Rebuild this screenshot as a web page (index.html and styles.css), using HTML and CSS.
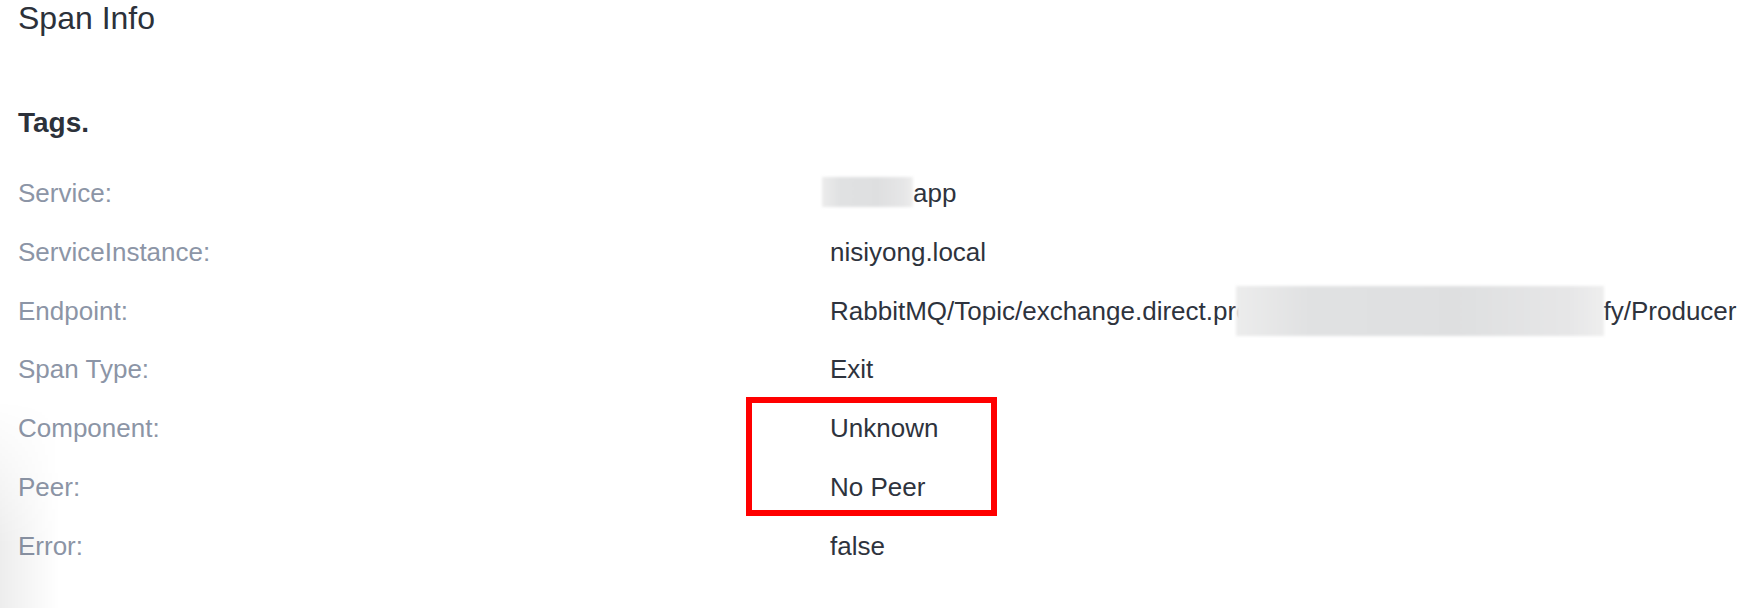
FILE: index.html
```html
<!DOCTYPE html>
<html>
<head>
<meta charset="utf-8">
<link rel="stylesheet" href="styles.css">
</head>
<body>
<div class="page">
  <h2 class="title">Span Info</h2>
  <h3 class="tags">Tags.</h3>
  <div class="list">
    <div class="label">Service:</div>
    <div class="value"><span class="mask mask-svc"></span>app</div>
    <div class="label">ServiceInstance:</div>
    <div class="value">nisiyong.local</div>
    <div class="label">Endpoint:</div>
    <div class="value">RabbitMQ/Topic/exchange.direct.pro<span class="mask mask-ep"></span>fy/Producer</div>
    <div class="label">Span Type:</div>
    <div class="value">Exit</div>
    <div class="label">Component:</div>
    <div class="value">Unknown</div>
    <div class="label">Peer:</div>
    <div class="value">No Peer</div>
    <div class="label">Error:</div>
    <div class="value">false</div>
  </div>
  <div class="highlight"></div>
  <div class="edge-shadow"></div>
</div>
</body>
</html>
```
FILE: styles.css
```css
html, body {
  margin: 0;
  padding: 0;
  background: #ffffff;
}
body {
  font-family: "Liberation Sans", Arial, sans-serif;
  width: 1762px;
  height: 608px;
  overflow: hidden;
}
.page {
  position: relative;
  height: 608px;
  padding: 0 0 0 18px;
  box-sizing: border-box;
}
.title {
  margin: 0;
  font-size: 32px;
  line-height: 36px;
  font-weight: normal;
  color: #2c313a;
}
.tags {
  margin: 72px 0 0 0;
  font-size: 28px;
  line-height: 30px;
  font-weight: bold;
  color: #2c313a;
}
.list {
  margin-top: 26px;
  display: grid;
  grid-template-columns: 812px 1fr;
  grid-auto-rows: 58.8px;
  font-size: 26px;
  line-height: 58.8px;
  white-space: nowrap;
}
.label {
  color: #8c95a6;
}
.value {
  color: #2e333d;
}
.mask {
  display: inline-block;
  vertical-align: middle;
  background: linear-gradient(to right, #ececec, #e0e1e2 20%, #dedfe0 60%, #e6e6e7 90%, #eeeeee);
  filter: blur(1.5px);
  position: relative;
}
.mask-svc {
  width: 91px;
  height: 30px;
  margin-left: -8px;
  margin-top: -6px;
}
.mask-ep {
  width: 368px;
  height: 50px;
  margin-left: -15px;
  margin-top: -4px;
}
.highlight {
  position: absolute;
  left: 746px;
  top: 397px;
  width: 251px;
  height: 119px;
  box-sizing: border-box;
  border: 6px solid #ff0000;
}
.edge-shadow {
  position: absolute;
  left: 0;
  top: 400px;
  width: 60px;
  height: 208px;
  background: linear-gradient(to right, rgba(0, 0, 0, 0.07), rgba(0, 0, 0, 0));
  -webkit-mask-image: linear-gradient(to bottom, transparent, #000 70%);
  mask-image: linear-gradient(to bottom, transparent, #000 70%);
}
```
